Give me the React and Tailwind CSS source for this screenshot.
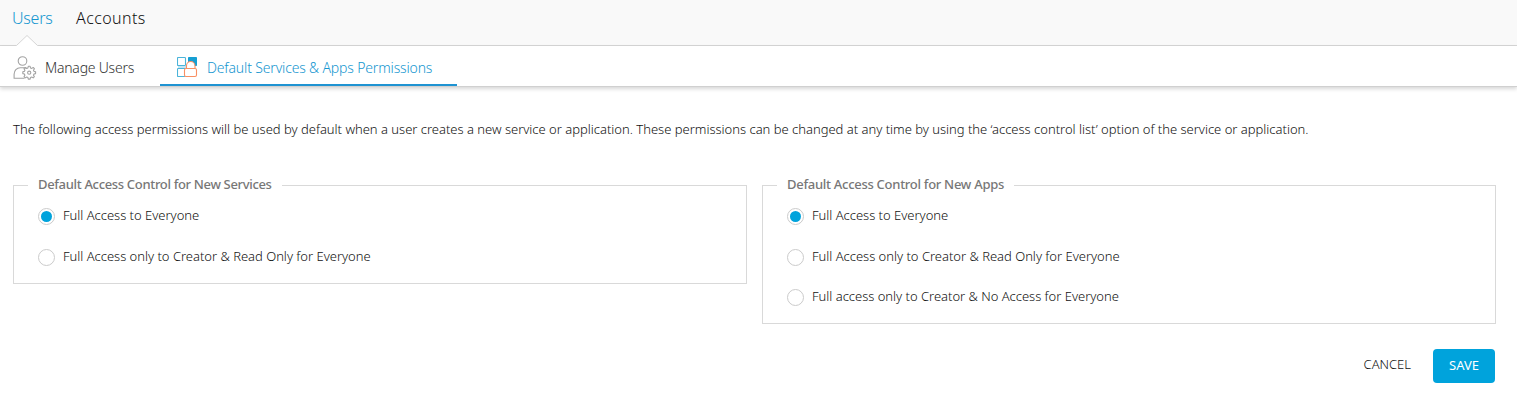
import React from "react";

function ManageUsersIcon() {
  return (
    <svg className="h-[24px] w-[24px] shrink-0" viewBox="0 0 24 24" fill="none" stroke="#a3a3a3" strokeWidth="1.1">
      <circle cx="9.5" cy="5" r="4.3" />
      <path d="M11.5 22.3H1.1v-4.1c0-3.7 2.6-6.4 6.2-6.4h3.6c1.2 0 2.2.2 3 .7" />
      <path
        strokeLinejoin="round"
        d="M15.3 10.3h1.8l.4 1.6 1.2.5 1.5-.9 1.2 1.2-.9 1.5.5 1.2 1.6.4v1.8l-1.6.4-.5 1.2.9 1.5-1.2 1.2-1.5-.9-1.2.5-.4 1.6h-1.8l-.4-1.6-1.2-.5-1.5.9-1.2-1.2.9-1.5-.5-1.2-1.6-.4v-1.8l1.6-.4.5-1.2-.9-1.5 1.2-1.2 1.5.9 1.2-.5z"
      />
      <circle cx="16.2" cy="16.7" r="1.6" />
    </svg>
  );
}

function PermissionsIcon() {
  return (
    <svg className="h-[21px] w-[21px] shrink-0" viewBox="0 0 21 21" fill="none" strokeWidth="1.1">
      <path fill="#c3e6f4" d="M1 9h10v2H1z" />
      <rect x="0.5" y="0.5" width="8" height="8" rx="0.8" fill="#fff" stroke="#4bb4da" />
      <rect x="0.5" y="11.5" width="8" height="8" rx="0.8" fill="#fff" stroke="#4bb4da" />
      <rect x="11" y="0" width="9" height="9" rx="0.8" fill="#169fd3" />
      <path d="M9.5 11.5V9c0-2.500 1.800-4.500 4.200-4.500S18 6.500 18 9v2.500" fill="#fff" stroke="#f98f62" />
      <rect x="7.5" y="11.500" width="12" height="8" rx="1.500" fill="#fff" stroke="#f98f62" />
    </svg>
  );
}

function Option({ label, checked = false, className = "" }) {
  return (
    <label className={"flex h-[17px] items-center " + className}>
      <span className="flex size-[17px] shrink-0 items-center justify-center rounded-full border border-[#cbcbcb] bg-white">
        {checked && <span className="size-[11px] rounded-full bg-[#00a3dc]" />}
      </span>
      <span className="mb-0.5 ml-2 text-[13px] leading-[17px] tracking-[-0.015px] whitespace-nowrap">{label}</span>
    </label>
  );
}

function Group({ title, legendClass, className, children }) {
  return (
    <fieldset className={"min-w-0 shrink-0 border border-[#d9d9d9] " + className}>
      <legend className={"ml-[14px] h-[21px] pl-[10px] text-[13px] leading-[19px] font-medium whitespace-nowrap text-[#777] " + legendClass}>
        {title}
      </legend>
      <div className="flex flex-col gap-6 pt-[12px] pl-6">{children}</div>
    </fieldset>
  );
}

export default function App() {
  return (
    <div className="h-[404px] w-[1517px] overflow-hidden bg-white font-['Noto_Sans','Open_Sans',sans-serif] font-light text-[#111]">
      <header className="flex h-[46px] border-b border-[#d6d6d6] bg-[#f9f9f9] pl-3 text-[16px] leading-6">
        <div className="relative h-[45px] w-[64px] pt-[6px] tracking-[-0.25px] text-[#1496d0]">
          Users
          <svg className="absolute top-[35px] left-[4px] h-[11px] w-[22px]" viewBox="0 0 22 11">
            <path d="M.5 10.500 11 .5l10.500 10V11H.5z" fill="#fff" />
            <path d="M.5 10.500 11 .5l10.500 10" fill="none" stroke="#d6d6d6" />
          </svg>
        </div>
        <div className="pt-[6px] tracking-[0.42px]">Accounts</div>
      </header>
      <nav className="flex h-[41px] border-b border-[#d0d0d0] text-[14px] shadow-[0_2px_4px_rgba(0,0,0,0.16)]">
        <div className="flex w-[160px] items-center pt-[3px] pl-[13px]">
          <ManageUsersIcon />
          <span className="ml-2 tracking-[-0.23px] text-[#333]">Manage Users</span>
        </div>
        <div className="flex w-[297px] items-center border-b-2 border-[#1f93d2] pt-[4px] pl-[17px] text-[#1496d0]">
          <PermissionsIcon />
          <span className="ml-[9px] tracking-[-0.16px] whitespace-nowrap">Default Services &amp; Apps Permissions</span>
        </div>
      </nav>
      <main className="pr-[22px] pl-[13px]">
        <p className="pt-[33px] text-[13px] leading-[18px] tracking-[-0.009px] whitespace-nowrap">
          The following access permissions will be used by default when a user creates a new service or application. These permissions can be changed at any time by using the ‘access control list’ option of the service or application.
        </p>
        <div className="mt-[37px] flex items-start gap-[15px]">
          <Group title="Default Access Control for New Services" legendClass="w-[254px] tracking-[-0.33px]" className="h-[109px] w-[734px]">
            <Option label="Full Access to Everyone" checked />
            <Option label="Full Access only to Creator & Read Only for Everyone" />
          </Group>
          <Group title="Default Access Control for New Apps" legendClass="w-[237px] tracking-[-0.28px]" className="h-[149px] w-[734px]">
            <Option label="Full Access to Everyone" checked />
            <Option label="Full Access only to Creator & Read Only for Everyone" />
            <Option label="Full access only to Creator & No Access for Everyone" className="-mt-px" />
          </Group>
        </div>
        <div className="mt-[25px] flex items-center justify-end gap-[22px] text-[13px]">
          <button className="-mt-0.5">CANCEL</button>
          <button className="h-[34px] w-[62px] rounded bg-[#00a3dc] font-normal text-white">SAVE</button>
        </div>
      </main>
    </div>
  );
}
